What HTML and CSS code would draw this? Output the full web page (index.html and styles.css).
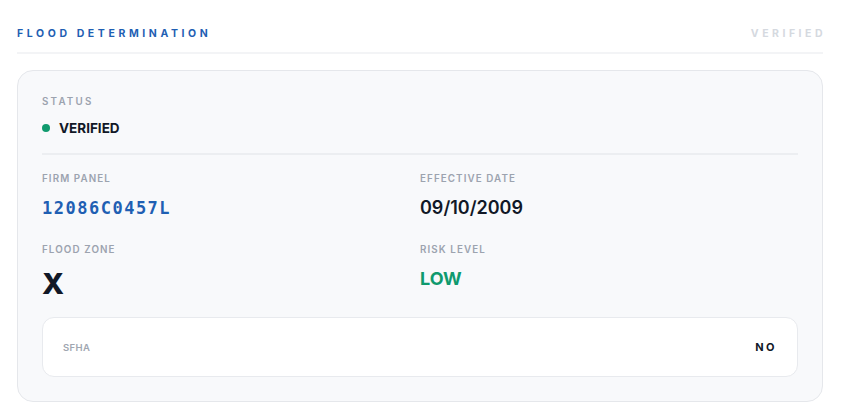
FILE: index.html
```html
<!DOCTYPE html>
<html lang="en">
<head>
<meta charset="utf-8">
<title>Flood Determination</title>
<link rel="stylesheet" href="styles.css">
</head>
<body>
<section class="panel">
  <header class="panel-head">
    <h2 class="panel-title">FLOOD DETERMINATION</h2>
    <span class="panel-badge">VERIFIED</span>
  </header>
  <div class="card">
    <div class="status">
      <div class="label label-wide">STATUS</div>
      <div class="status-value"><span class="dot"></span>VERIFIED</div>
    </div>
    <div class="grid">
      <div class="field">
        <div class="label">FIRM PANEL</div>
        <div class="value mono">12086C0457L</div>
      </div>
      <div class="field">
        <div class="label">EFFECTIVE DATE</div>
        <div class="value">09/10/2009</div>
      </div>
      <div class="field">
        <div class="label">FLOOD ZONE</div>
        <div class="value big">X</div>
      </div>
      <div class="field">
        <div class="label">RISK LEVEL</div>
        <div class="value green">LOW</div>
      </div>
    </div>
    <div class="sfha">
      <span class="sfha-label">SFHA</span>
      <span class="sfha-value">NO</span>
    </div>
  </div>
</section>
</body>
</html>
```
FILE: styles.css
```css
* { box-sizing: border-box; }
html, body { margin: 0; padding: 0; background: #ffffff; }
body {
  font-family: Inter, "Noto Sans", "Liberation Sans", sans-serif;
  color: #111827;
}
.panel { padding: 16px 19px 0 17px; }
.panel-head {
  display: flex;
  justify-content: space-between;
  align-items: center;
  height: 38px;
  border-bottom: 2px solid #f3f4f6;
  margin-bottom: 16px;
}
.panel-title {
  margin: 0;
  font-size: 10.5px;
  font-weight: 700;
  letter-spacing: 3.6px;
  color: #1f5fb3;
  line-height: 30px;
}
.panel-badge {
  font-size: 10.5px;
  font-weight: 700;
  letter-spacing: 3.5px;
  color: #d5d9df;
  line-height: 30px;
  margin-right: -3px;
}
.card {
  background: #f8f9fb;
  border: 1px solid #e5e7eb;
  border-radius: 16px;
  padding: 24px 24px 24px 24px;
}
.status {
  padding-bottom: 17px;
  border-bottom: 2px solid #eceef1;
  margin-bottom: 17px;
}
.label {
  font-size: 9.8px;
  font-weight: 600;
  color: #9ca3af;
  letter-spacing: 1.1px;
  line-height: 14px;
}
.label-wide { letter-spacing: 2.2px; }
.status-value {
  display: flex;
  align-items: center;
  gap: 9px;
  margin-top: 11px;
  font-size: 13.5px;
  font-weight: 700;
  letter-spacing: 0;
  line-height: 16px;
}
.dot {
  width: 8px;
  height: 8px;
  border-radius: 50%;
  background: #109a6e;
}
.grid {
  display: grid;
  grid-template-columns: 1fr 1fr;
  row-gap: 23px;
  margin-bottom: 18px;
}
.value {
  margin-top: 10px;
  font-size: 18px;
  font-weight: 600;
  line-height: 24px;
}
.mono {
  font-family: "DejaVu Sans Mono", "Liberation Mono", monospace;
  font-weight: 700;
  color: #1f5fb3;
  font-size: 17px;
  letter-spacing: 1.5px;
}
.big {
  font-size: 29px;
  font-weight: 800;
  line-height: 30px;
  margin-top: 12px;
}
.green {
  color: #0f9a6e;
  font-weight: 700;
  margin-top: 10px;
}
.sfha {
  display: flex;
  justify-content: space-between;
  align-items: center;
  height: 60px;
  background: #ffffff;
  border: 1px solid #e8eaee;
  border-radius: 12px;
  padding: 0 22px 0 20px;
}
.sfha-label {
  font-size: 9.5px;
  font-weight: 600;
  color: #a0a6b1;
  letter-spacing: 0.4px;
}
.sfha-value {
  font-size: 11px;
  font-weight: 700;
  letter-spacing: 2.4px;
  margin-right: -2px;
}
```
